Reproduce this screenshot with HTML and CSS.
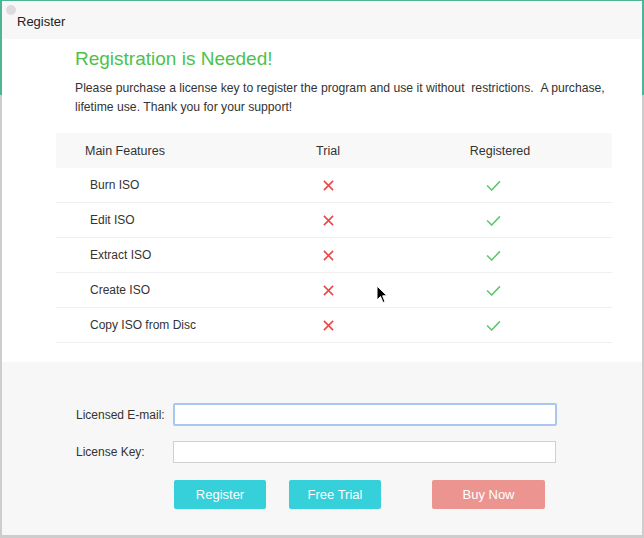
FILE: index.html
```html
<!DOCTYPE html>
<html>
<head>
<meta charset="utf-8">
<link rel="stylesheet" href="styles.css">
</head>
<body>
<div class="frame">
  <div class="window">
    <div class="titlebar">
      <span class="dot"></span>
      <span class="title">Register</span>
    </div>
    <div class="content">
      <h1 class="heading">Registration is Needed!</h1>
      <p class="intro">Please purchase a license key to register the program and use it without &nbsp;restrictions. &nbsp;A purchase, lifetime use. Thank you for your support!</p>
      <div class="table">
        <div class="row head">
          <div class="c1">Main Features</div>
          <div class="c2">Trial</div>
          <div class="c3">Registered</div>
        </div>
        <div class="row">
          <div class="c1">Burn ISO</div>
          <div class="c2"><svg class="x" viewBox="0 0 12 12"><path d="M1 1L11 11M11 1L1 11"/></svg></div>
          <div class="c3"><svg class="ok" viewBox="0 0 16 12"><path d="M1 6L6 11L15 1.5"/></svg></div>
        </div>
        <div class="row">
          <div class="c1">Edit ISO</div>
          <div class="c2"><svg class="x" viewBox="0 0 12 12"><path d="M1 1L11 11M11 1L1 11"/></svg></div>
          <div class="c3"><svg class="ok" viewBox="0 0 16 12"><path d="M1 6L6 11L15 1.5"/></svg></div>
        </div>
        <div class="row">
          <div class="c1">Extract ISO</div>
          <div class="c2"><svg class="x" viewBox="0 0 12 12"><path d="M1 1L11 11M11 1L1 11"/></svg></div>
          <div class="c3"><svg class="ok" viewBox="0 0 16 12"><path d="M1 6L6 11L15 1.5"/></svg></div>
        </div>
        <div class="row">
          <div class="c1">Create ISO</div>
          <div class="c2"><svg class="x" viewBox="0 0 12 12"><path d="M1 1L11 11M11 1L1 11"/></svg></div>
          <div class="c3"><svg class="ok" viewBox="0 0 16 12"><path d="M1 6L6 11L15 1.5"/></svg></div>
        </div>
        <div class="row">
          <div class="c1">Copy ISO from Disc</div>
          <div class="c2"><svg class="x" viewBox="0 0 12 12"><path d="M1 1L11 11M11 1L1 11"/></svg></div>
          <div class="c3"><svg class="ok" viewBox="0 0 16 12"><path d="M1 6L6 11L15 1.5"/></svg></div>
        </div>
      </div>
    </div>
    <div class="form">
      <div class="field">
        <label class="label">Licensed E-mail:</label>
        <div class="input focused"></div>
      </div>
      <div class="field">
        <label class="label">License Key:</label>
        <div class="input"></div>
      </div>
      <div class="buttons">
        <button class="btn cyan">Register</button>
        <button class="btn cyan trial">Free Trial</button>
        <button class="btn red">Buy Now</button>
      </div>
    </div>
  </div>
  <svg class="cursor" viewBox="0 0 12 19" width="12" height="19"><path d="M1 1L1 15L4.5 11.5L7 17.5L9 16.7L6.6 10.8L11 10.8Z" fill="#000" stroke="#fff" stroke-width="1"/></svg>
</div>
</body>
</html>
```
FILE: styles.css
```css
html, body {
  margin: 0;
  padding: 0;
}
body {
  width: 644px;
  height: 538px;
  background: #d6d6d6;
  font-family: "Liberation Sans", Arial, sans-serif;
  overflow: hidden;
}
.frame {
  position: relative;
  width: 644px;
  height: 538px;
  box-sizing: border-box;
  padding: 1px 2px 3px 2px;
  background: linear-gradient(to bottom, #4db595 0, #4db595 95px, #cdcdcd 95px, #cdcdcd 100%);
}
.window {
  height: 100%;
  background: #f7f7f7;
  display: flex;
  flex-direction: column;
}
.titlebar {
  height: 38px;
  position: relative;
  display: flex;
  align-items: center;
  background: #f7f7f7;
}
.dot {
  position: absolute;
  left: 4px;
  top: 4px;
  width: 10px;
  height: 10px;
  border-radius: 50%;
  background: #dcdcdc;
}
.title {
  margin-left: 15px;
  margin-top: 2px;
  font-size: 13px;
  color: #222;
}
.content {
  background: #fff;
  padding: 8px 0 19px 0;
}
.heading {
  margin: 0 0 8px 73px;
  font-weight: normal;
  font-size: 19px;
  line-height: 24px;
  color: #4cc24c;
}
.intro {
  margin: 0 0 16px 73px;
  width: 560px;
  font-size: 12.2px;
  line-height: 19px;
  color: #333;
}
.table {
  margin-left: 54px;
  width: 556px;
}
.row {
  display: grid;
  grid-template-columns: 200px 144px 200px;
  height: 34px;
  align-items: center;
  border-bottom: 1px solid #efefef;
  font-size: 12px;
  color: #333;
}
.row.head {
  height: 35px;
  border-bottom: none;
  background: #f8f8f8;
  font-size: 12.5px;
}
.c1 {
  padding-left: 34px;
}
.head .c1 {
  padding-left: 29px;
}
.c2, .c3 {
  display: flex;
  justify-content: center;
}
.x {
  width: 11px;
  height: 11px;
  fill: none;
  stroke: #ea4646;
  stroke-width: 1.7;
}
.ok {
  width: 15px;
  height: 11px;
  fill: none;
  stroke: #5cc66a;
  stroke-width: 1.6;
  margin-left: -14px;
}
.form {
  flex: 1;
  background: #f7f7f7;
  padding: 41px 0 0 74px;
}
.field {
  display: flex;
  align-items: center;
  margin-bottom: 15px;
}
.field + .field {
  margin-bottom: 17px;
}
.label {
  width: 97px;
  font-size: 12px;
  color: #333;
}
.input {
  width: 384px;
  height: 23px;
  box-sizing: border-box;
  background: #fff;
  border: 1px solid #d0d0d0;
}
.input.focused {
  border: 2px solid #a9c6ee;
  border-radius: 2px;
}
.input:not(.focused) {
  width: 383px;
  height: 22px;
}
.buttons {
  display: flex;
  margin-left: 98px;
}
.btn {
  height: 29px;
  width: 92px;
  border: none;
  border-radius: 2px;
  color: #fff;
  font-family: "Liberation Sans", Arial, sans-serif;
  font-size: 13px;
  padding: 0;
}
.cyan {
  background: #35d0da;
}
.trial {
  margin-left: 23px;
}
.red {
  background: #ec9490;
  width: 113px;
  margin-left: 51px;
}
.cursor {
  position: absolute;
  left: 376px;
  top: 285px;
}
```
